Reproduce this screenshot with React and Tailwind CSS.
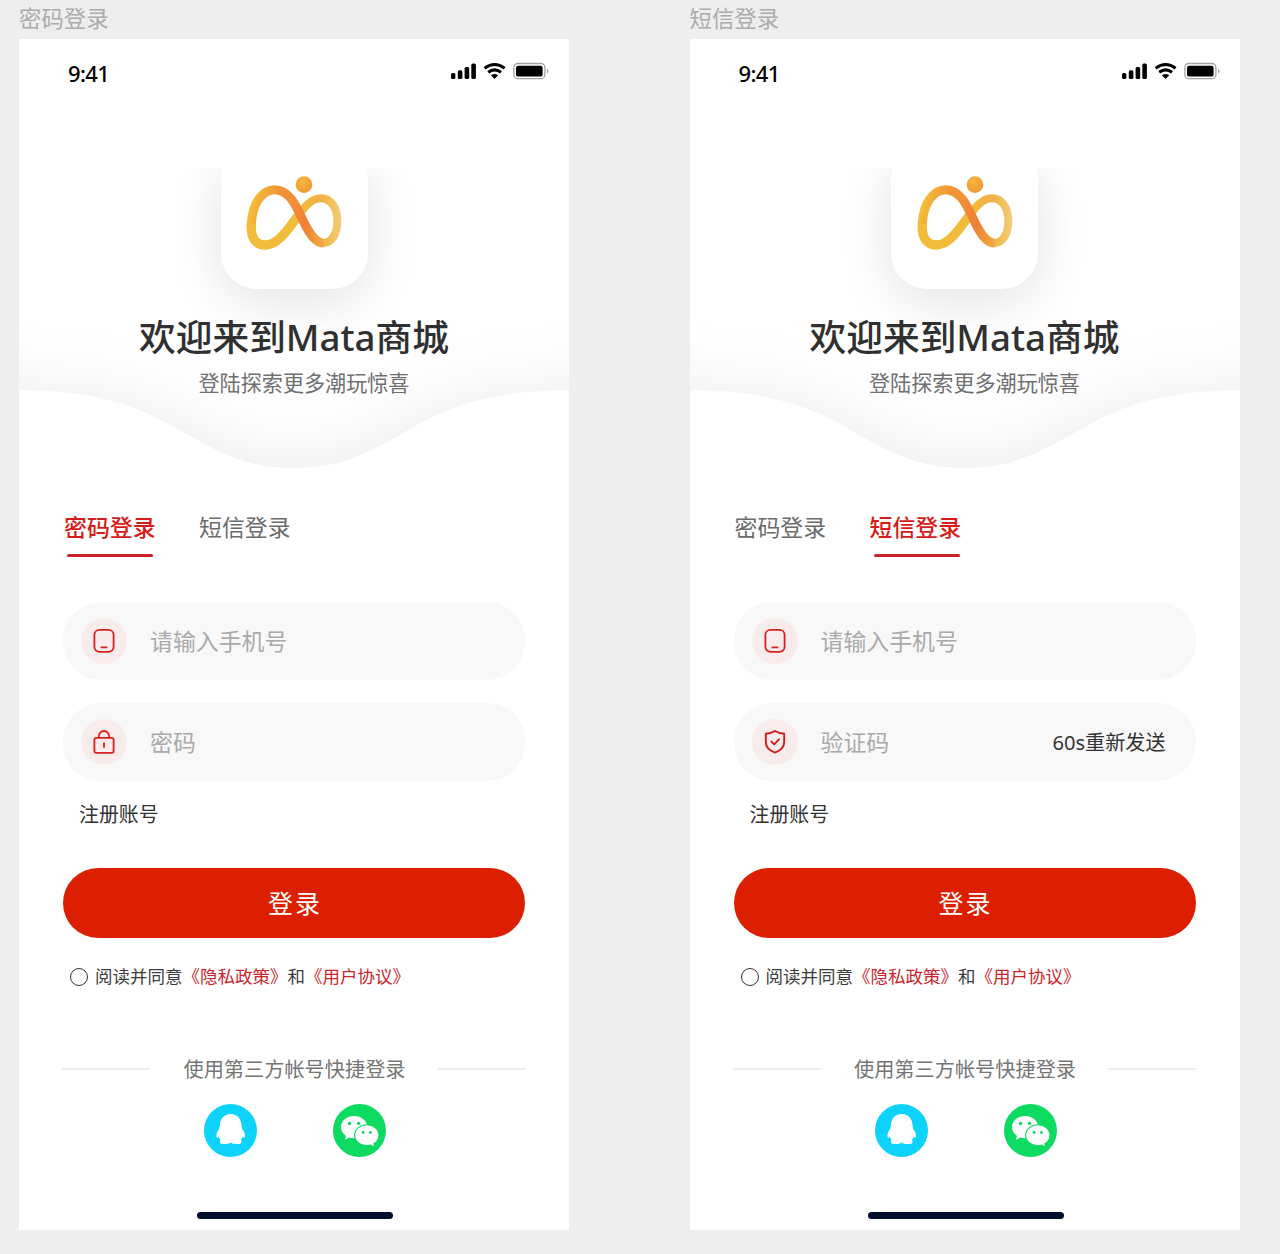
import React from "react";

function StatusIcons() {
  return (
    <svg width="100" height="20" viewBox="0 0 100 20">
      <g fill="#000">
        <rect x="1" y="13" width="4.4" height="6" rx="1.6" />
        <rect x="7.8" y="10.3" width="4.6" height="8.7" rx="1.6" />
        <rect x="14.6" y="7" width="4.6" height="12" rx="1.6" />
        <rect x="21.3" y="3.4" width="4.6" height="15.6" rx="1.6" />
        <path d="M44.6 18.4 L41.4 15.4 Q44.6 13.2 47.8 15.4 Z" stroke="#000" strokeWidth="0.8" strokeLinejoin="round" />
      </g>
      <g fill="none" stroke="#000" strokeWidth="3">
        <path d="M34.6 8.2 Q44.6 0.8 54.6 8.2" />
        <path d="M38.2 12.3 Q44.6 7.4 51 12.3" />
      </g>
      <rect x="63.9" y="3.5" width="31" height="15.2" rx="4" fill="none" stroke="#a3a3a3" strokeWidth="1.3" />
      <rect x="66" y="5.8" width="26.6" height="10.8" rx="2.2" fill="#000" />
      <path d="M97 8.6 Q100 11 97 13.6 Z" fill="#a3a3a3" />
    </svg>
  );
}

function BrandMark({ id }) {
  return (
    <svg width="96" height="74" viewBox="138 76 288 222" className="block">
      <defs>
        <linearGradient id={id + "a"} gradientUnits="userSpaceOnUse" x1="150" y1="180" x2="370" y2="240">
          <stop offset="0" stopColor="#f4bd39" />
          <stop offset="0.3" stopColor="#f09434" />
          <stop offset="0.5" stopColor="#f28f38" />
          <stop offset="0.75" stopColor="#ee8032" />
          <stop offset="1" stopColor="#f0a540" />
        </linearGradient>
        <linearGradient id={id + "b"} gradientUnits="userSpaceOnUse" x1="300" y1="0" x2="420" y2="0">
          <stop offset="0" stopColor="#f1bb3d" />
          <stop offset="0.55" stopColor="#f1b047" />
          <stop offset="0.8" stopColor="#f1c25a" />
          <stop offset="1" stopColor="#f0cb7c" />
        </linearGradient>
        <radialGradient id={id + "c"} cx="0.4" cy="0.3" r="0.8">
          <stop offset="0" stopColor="#f5b63c" />
          <stop offset="1" stopColor="#eb9632" />
        </radialGradient>
      </defs>
      <path d="M154 218 C151 262 167 283 196 283 C237 283 268 229 296 193" fill="none" stroke="#f2bc3b" strokeWidth="28" />
      <path d="M292 198 C316 165 336 143 362 143 C395 143 412 174 412 210 C412 248 397 277 368 277" fill="none" stroke={"url(#" + id + "b)"} strokeWidth="24" />
      <path d="M154 220 C157 155 189 117 224 117 C269 117 290 169 310 212 C329 250 346 277 370 277" fill="none" stroke={"url(#" + id + "a)"} strokeWidth="27" />
      <circle cx="312" cy="102" r="25" fill={"url(#" + id + "c)"} />
    </svg>
  );
}

function Wave({ id }) {
  const shape = "M-1 -20 V222 C56 222 106 231 150 256 C199 284 226 300 275 300 C324 300 351 284 400 256 C444 231 494 222 552 222 V-20 Z";
  return (
    <svg className="absolute inset-0" width="550" height="312" viewBox="0 0 550 312">
      <defs>
        <clipPath id={id + "clip"}><path d={shape} /></clipPath>
        <filter id={id + "blur"} filterUnits="userSpaceOnUse" x="-200" y="0" width="950" height="550">
          <feGaussianBlur stdDeviation="38" />
        </filter>
      </defs>
      <g clipPath={"url(#" + id + "clip)"}>
        <path
          d="M-180 222 C56 222 106 231 150 256 C199 284 226 300 275 300 C324 300 351 284 400 256 C444 231 494 222 730 222 V520 H-180 Z"
          fill="#000" fillOpacity="0.082" filter={"url(#" + id + "blur)"}
        />
      </g>
    </svg>
  );
}

function PhoneIcon() {
  return (
    <svg width="24" height="26" viewBox="0 0 24 26" fill="none" stroke="#d8201c" strokeWidth="1.8" strokeLinecap="round">
      <rect x="2.4" y="1.8" width="19.2" height="22" rx="5" />
      <path d="M9.4 19.4 H14.6" />
    </svg>
  );
}

function LockIcon() {
  return (
    <svg width="24" height="26" viewBox="0 0 24 26" fill="none" stroke="#d8201c" strokeWidth="1.8" strokeLinecap="round">
      <rect x="2.4" y="8.9" width="19.2" height="15" rx="1.8" />
      <path d="M6.8 8.6 V7.2 A5.2 5.2 0 0 1 17.2 7.2 V8.6" />
      <path d="M12 14.2 V18" />
    </svg>
  );
}

function ShieldIcon() {
  return (
    <svg width="24" height="26" viewBox="0 0 24 26" fill="none" stroke="#d31a1d" strokeWidth="1.9" strokeLinecap="round" strokeLinejoin="round">
      <path d="M12 2 C15 3.8 18 4.6 21.2 4.8 V13 C21.2 18.4 17.4 21.6 12 23.6 C6.6 21.6 2.8 18.4 2.8 13 V4.8 C6 4.6 9 3.8 12 2 Z" />
      <path d="M8.4 12.6 L11.2 15.4 L16 10.4" />
    </svg>
  );
}

function QQIcon() {
  return (
    <svg width="53" height="53" viewBox="0 0 53 53">
      <circle cx="26.5" cy="26.5" r="26.5" fill="#0dd3fb" />
      <path fill="#fff" d="M26.7 10 C20 10 15.9 15 15.9 21.5 C15.9 22.7 15.4 23.5 15.2 25 C13 27.8 12 30.5 12.6 33 C12.9 34.3 13.5 34.3 14.5 32.6 C15 34 15.7 35 16.6 36 C15.3 37 15.5 39.8 18.5 40 C22 40.3 25 39.8 26.7 38.4 C28.4 39.8 31.4 40.3 35 40 C38 39.8 38.1 37 36.8 36 C37.7 35 38.4 34 38.9 32.6 C39.9 34.3 40.5 34.3 40.8 33 C41.4 30.5 40.4 27.8 38.2 25 C38 23.5 37.5 22.7 37.5 21.5 C37.5 15 33.4 10 26.7 10 Z" />
    </svg>
  );
}

function WeChatIcon() {
  return (
    <svg width="53" height="53" viewBox="0 0 53 53">
      <circle cx="26.5" cy="26.5" r="26.5" fill="#0ddb61" />
      <path fill="#fff" d="M21 12 C13.8 12 8 16.8 8 23.1 C8 26.8 9.8 29.8 13 32 L11.8 36 L16.4 33.5 C18 34 19.4 34.2 21 34.2 C28.2 34.2 34.2 29.4 34.2 23.1 C34.2 16.8 28.2 12 21 12 Z" />
      <path fill="#fff" stroke="#0ddb61" strokeWidth="1.1" d="M33.8 20.8 C27.1 20.8 21.6 25.4 21.6 31.2 C21.6 37 27.1 41.7 33.8 41.7 C35.2 41.7 36.5 41.5 37.8 41.1 L41.8 43.4 L40.8 39.8 C44 37.8 46 34.8 46 31.2 C46 25.4 40.5 20.8 33.8 20.8 Z" />
      <g fill="#0ddb61">
        <circle cx="16.5" cy="19.4" r="1.7" /><circle cx="25.6" cy="19.4" r="1.7" />
        <circle cx="30.2" cy="28.5" r="1.4" /><circle cx="37.5" cy="28.5" r="1.4" />
      </g>
    </svg>
  );
}

function Field({ icon, placeholder, action }) {
  return (
    <div className="flex h-[78px] w-[462px] items-center rounded-[38px] bg-[#f8f8f8] pl-[18px] pr-[30px]">
      <div className="flex size-[46px] items-center justify-center rounded-full bg-[#f8ebec]">{icon}</div>
      <span className="ml-[23px] pt-[2px] text-[22.9px] leading-8 text-[#aaaaaa]">{placeholder}</span>
      {action && <span className="ml-auto pt-[2px] text-[20.1px] leading-8 text-[#333333]">{action}</span>}
    </div>
  );
}

function Tab({ label, active, className }) {
  return (
    <div className={className}>
      <div className={active ? "whitespace-nowrap text-[22.9px] leading-8 font-medium text-[#d51c1b]" : "whitespace-nowrap text-[22.9px] leading-8 text-[#6b6b6b]"}>{label}</div>
      {active && <div className="mx-auto mt-[10px] h-[3px] w-[86px] rounded-full bg-[#cb2327]" />}
    </div>
  );
}

function Screen({ id, title, mode }) {
  const sms = mode === "sms";
  return (
    <section className="w-[550px]">
      <h2 className="h-[39px] pt-[3px] text-[22.4px] leading-8 text-[#acacac]">{title}</h2>
      <div className="flex h-[1191px] flex-col bg-white">
        <header className="flex h-[129px] items-start justify-between pl-[49px] pr-[19px] pt-[21px]">
          <span className="text-[22px] leading-[26px] font-medium tracking-[-0.6px] text-black">9:41</span>
          <StatusIcons />
        </header>

        <div className="relative flex h-[312px] flex-col items-center overflow-hidden">
          <Wave id={id} />
          <div className="relative -mt-[26px] flex h-[147px] w-[147px] shrink-0 justify-center rounded-[36px] bg-white pt-[34px] shadow-[0_14px_54px_rgba(0,0,0,0.11)]">
            <BrandMark id={id} />
          </div>
          <h1 className="relative mt-[23px] whitespace-nowrap text-[36.7px] leading-[50px] font-medium text-[#303030]">欢迎来到Mata商城</h1>
          <p className="relative ml-[20px] mt-[5px] whitespace-nowrap text-[21.1px] leading-[32px] text-[#707070]">登陆探索更多潮玩惊喜</p>
        </div>

        <nav className="flex h-[122px] pl-[45px] pt-[32px]">
          <Tab label="密码登录" active={!sms} className="mr-[44px] w-[91px]" />
          <Tab label="短信登录" active={sms} className="w-[94px]" />
        </nav>

        <div className="flex flex-col gap-[23px] pl-[44px]">
          <Field icon={<PhoneIcon />} placeholder="请输入手机号" />
          {sms
            ? <Field icon={<ShieldIcon />} placeholder="验证码" action="60s重新发送" />
            : <Field icon={<LockIcon />} placeholder="密码" />}
        </div>

        <a className="ml-[60px] mt-[18px] text-[19.9px] leading-8 text-[#333333]">注册账号</a>

        <button className="ml-[44px] mt-[37px] h-[70px] w-[462px] rounded-full bg-[#dc1f00] pl-[2px] text-[25px] leading-[70px] tracking-[2px] text-white">登录</button>

        <div className="ml-[51px] mt-[22px] flex h-8 items-center whitespace-nowrap text-[17.5px] leading-8 text-[#3c3c3c]">
          <span className="mr-[7px] mt-[1px] size-[18px] rounded-full border border-[#333333]" />
          阅读并同意<span className="text-[#c9252b]">《隐私政策》</span>和<span className="text-[#c9252b]">《用户协议》</span>
        </div>

        <div className="mx-[43px] mt-[61px] flex h-8 items-center justify-between text-[20.2px] leading-8 text-[#757575]">
          <span className="h-[1.5px] w-[88px] bg-[#eeeeee]" />
          <span className="pl-[1px]">使用第三方帐号快捷登录</span>
          <span className="h-[1.5px] w-[88px] bg-[#eeeeee]" />
        </div>

        <div className="mt-[19px] flex gap-[76px] pl-[185px]">
          <QQIcon />
          <WeChatIcon />
        </div>

        <div className="ml-[178px] mt-[55px] h-[7px] w-[196px] rounded-full bg-[#020d2e]" />
      </div>
    </section>
  );
}

export default function App() {
  return (
    <main
      lang="zh-CN"
      className="flex h-[1254px] w-[1280px] gap-[120.5px] overflow-hidden bg-[#eeeeee] pl-[19px] font-['Noto_Sans','Noto_Sans_CJK_SC',sans-serif]"
    >
      <Screen id="pwd" title="密码登录" mode="password" />
      <Screen id="sms" title="短信登录" mode="sms" />
    </main>
  );
}
